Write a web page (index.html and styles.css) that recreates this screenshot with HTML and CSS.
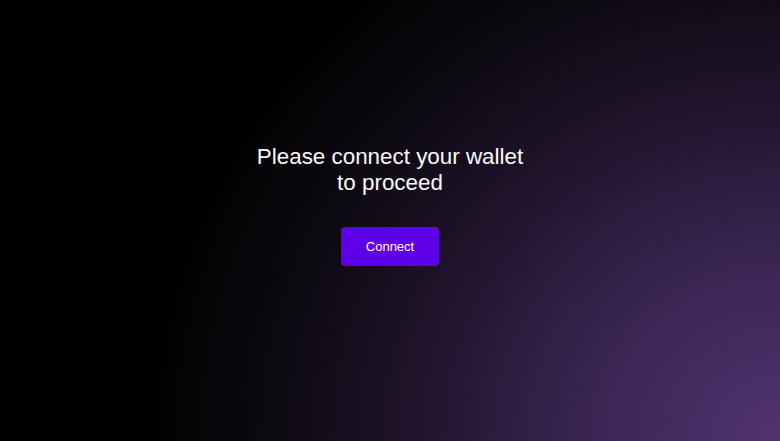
FILE: index.html
```html
<!DOCTYPE html>
<html>

<head>
    <meta charset="utf-8" />
    <title>Connect wallet</title>
    <link rel="stylesheet" href="styles.css">
</head>

<body>
    <div class="screen">
        <h2 class="prompt">Please connect your wallet<br>to proceed</h2>
        <button class="connect">Connect</button>
    </div>
</body>

</html>
```

FILE: styles.css
```css
html,
body {
    margin: 0;
    padding: 0;
    height: 100%;
}

body {
    background: #000;
    font-family: "Liberation Sans", Arial, sans-serif;
    color: #fff;
}

.screen {
    box-sizing: border-box;
    height: 100%;
    display: flex;
    flex-direction: column;
    align-items: center;
    justify-content: center;
    padding-bottom: 31px;
    background: radial-gradient(ellipse 640px 600px at 100% 100%, #52336f 0%, #3a2553 30%, #22152f 55%, #0c0910 80%, #000 100%);
}

.prompt {
    margin: 0 0 31px;
    font-size: 22.4px;
    font-weight: 400;
    line-height: 26px;
    text-align: center;
    color: #fafafa;
}

.connect {
    width: 98px;
    height: 39px;
    border: 0;
    border-radius: 4px;
    background: #5e00e8;
    color: #fff;
    font: 13px "Liberation Sans", Arial, sans-serif;
    cursor: pointer;
}
```
